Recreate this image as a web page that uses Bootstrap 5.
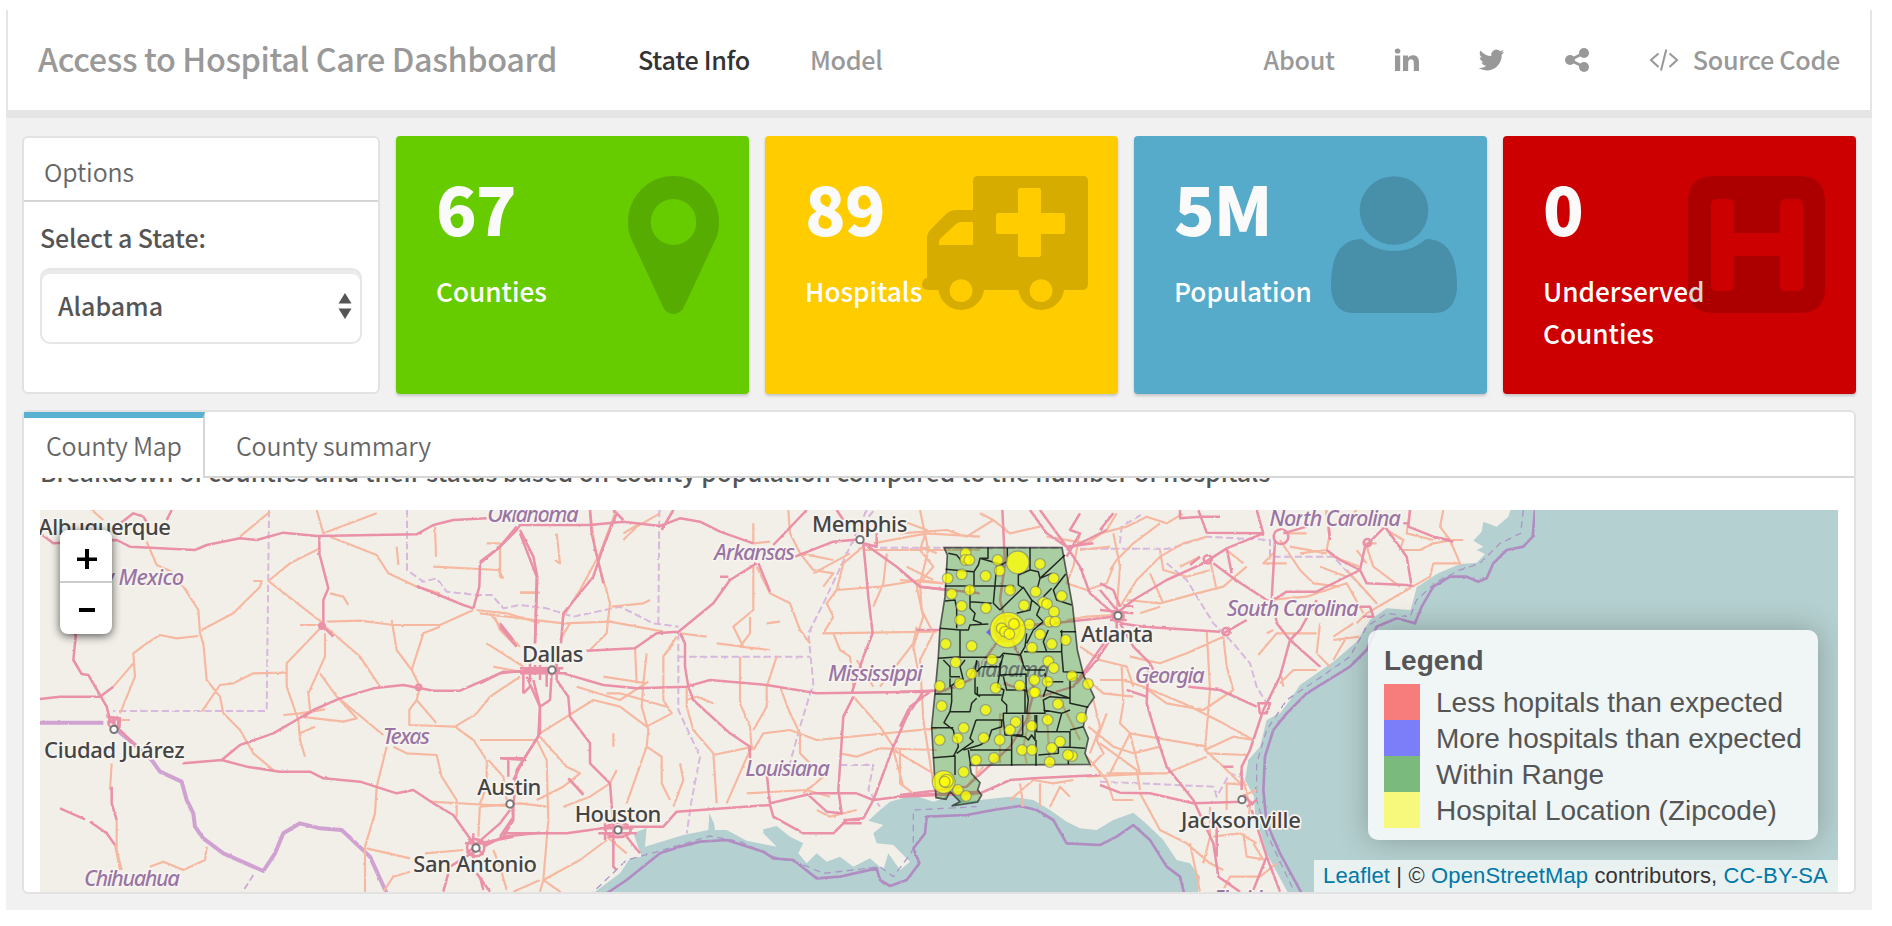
<!DOCTYPE html>
<html lang="en">
<head>
<meta charset="utf-8">
<meta name="viewport" content="width=device-width, initial-scale=1">
<title>Access to Hospital Care Dashboard</title>
<link href="https://cdn.jsdelivr.net/npm/bootstrap@5.3.0/dist/css/bootstrap.min.css" rel="stylesheet">
<style>
body{font-family:"Noto Sans CJK SC","Noto Sans",sans-serif;color:#555;background:#fff;overflow:hidden;height:926px}
.frame{margin:10px 20px 0 6px;height:900px;background:#f1f1f1}
.topbar{height:108px;background:#fff;border:solid #e5e5e5;border-width:0 2px 8px;padding:0 30px 0 30px;flex-wrap:nowrap}
.topbar .navbar-brand{font-size:32.4px;line-height:40px;color:#999;margin:-4px 0 0;width:600px;padding:0;font-weight:500;letter-spacing:-.38px}
.topbar .nav-link{font-size:25.2px;line-height:40px;margin-top:-2px;color:#999;padding:0;white-space:nowrap;font-weight:500;letter-spacing:-.3px}
.topbar .nav-link.active{color:#333}
.topbar svg{display:block;fill:#999}
.dash{padding:18px 16px 0;gap:16px}
.panel{border:2px solid #e2e2e2;border-radius:6px;background:#fff}
.options{width:358px}
.options .panel-title{height:64px;border-bottom:2px solid #d6d6d6;font-size:24.9px;line-height:40px;padding:13px 0 0 20px;font-weight:350;color:#666;letter-spacing:-.1px}
.options label{font-size:25px;line-height:40px;margin:15px 0 11px 16px;display:block;font-weight:500;letter-spacing:-.15px}
.picker{margin:0 16px;height:76px;border:2px solid #e6e6e6;border-radius:10px;box-shadow:inset 0 4px 0 #ebebeb;font-size:25px;font-weight:500;padding:0 8px 0 16px}
.valuebox{flex:1 1 0;height:258px;border-radius:4px;box-shadow:0 2px 3px rgba(0,0,0,.18);color:#fafafa;padding:0 40px;position:relative}
.valuebox .figure-no{font-size:67px;font-weight:900;letter-spacing:-1px;line-height:80px;padding-top:31px}
.valuebox .caption-txt{font-size:26.200px;font-weight:500;line-height:42px;margin-top:23px;color:#fff;width:170px}
.valuebox svg{position:absolute;right:30px;top:40px;fill:#000;fill-opacity:.155}
.tabs-row{height:66px;border-bottom:2px solid #d6d6d6;font-size:25px;font-weight:350;color:#666;line-height:40px;letter-spacing:-.25px}
.tab-on{width:181px;height:66px;border-top:6px solid #59b0d0;border-right:2px solid #d6d6d6;padding:7px 0 0 22px;background:#fff;white-space:nowrap}
.tab-off{padding:13px 0 0 31px}
.scroll-part{height:414px;overflow:hidden;position:relative}
.intro{font-size:24.6px;line-height:40px;margin:-27px 0 19px 16px;white-space:nowrap;font-weight:500}
.map{position:relative;width:1798px;height:382px;margin-left:16px;overflow:hidden}
.map>svg{display:block}
.zoomer{position:absolute;left:20px;top:20px;width:52px;border-radius:8px;background:#fff;box-shadow:0 2px 10px rgba(0,0,0,.65)}
.zoomer div{height:51px;padding-top:2px}
.zoomer div:first-child{height:53px;border-bottom:2px solid #ccc;padding-top:6px}
.zoomer svg{margin-left:2px}
.legend-box{position:absolute;left:1328px;top:120px;width:450px;height:210px;border-radius:10px;background:rgba(255,255,255,.8);box-shadow:0 0 30px rgba(0,0,0,.25);padding:15px 0 0 16px;font:28px/36px "Liberation Sans",Arial,sans-serif;color:#555;white-space:nowrap}
.legend-box h4{font:bold 28px/32px "Liberation Sans",Arial,sans-serif;margin:0;padding:0 0 7px 0}
.legend-box i{width:36px;height:36px;opacity:.75;margin-right:16px}
.legend-box span{position:relative;top:1px}
.credit{position:absolute;right:0;bottom:0;height:32px;width:524px;background:rgba(255,255,255,.7);font:22px/32px "Liberation Sans",Arial,sans-serif;letter-spacing:.14px;color:#333;padding-left:9px;white-space:nowrap}
.credit a{color:#0078a8;text-decoration:none}
.city{font:500 66px "Noto Sans",sans-serif;fill:#444;stroke:#f7f4ef;stroke-width:10px;paint-order:stroke;stroke-linejoin:round}
.region{font:italic 500 66px "Noto Sans",sans-serif;fill:#9a74a3;stroke:#f7f4ef;stroke-width:10px;paint-order:stroke;stroke-linejoin:round}
</style>
<script src="https://cdn.jsdelivr.net/npm/bootstrap@5.3.0/dist/js/bootstrap.bundle.min.js"></script>
</head>
<body>
<div class="frame">
<nav class="navbar topbar d-flex align-items-center">
  <a class="navbar-brand" href="#">Access to Hospital Care Dashboard</a>
  <a class="nav-link active" href="#">State Info</a>
  <a class="nav-link" style="margin-left:60px" href="#">Model</a>
  <div class="d-flex align-items-center ms-auto">
    <a class="nav-link" href="#">About</a>
    <svg style="margin-left:59px" width="26" height="26" viewBox="0 0 26 26"><path d="M1 8.500h5.200V24H1zM3.600 1.400a2.700 2.500 0 1 1 0 5.200a2.700 2.500 0 1 1 0-5.200M9 8.500h5.100v2.200c1-1.500 2.400-2.500 4.800-2.500 3.800 0 6.100 2.500 6.100 7V24h-5.200v-8.200c0-2.200-.8-3.600-2.700-3.600-2 0-2.900 1.500-2.900 3.600V24H9z"/></svg>
    <svg style="margin-left:59px" width="26" height="26" viewBox="64 256 1600 1280"><path d="M1620 408q-67 98-162 167 1 14 1 42 0 130-38 259.500t-115.500 248.500-184.500 210.500-258 146-323 54.500q-271 0-496-145 35 4 78 4 225 0 401-138-105-2-188-64.500t-114-159.500q33 5 61 5 43 0 85-11-112-23-185.500-111.500t-73.500-205.500v-4q68 38 146 41-66-44-105-115t-39-154q0-88 44-163 121 149 294.500 238.500t371.500 99.500q-8-38-8-74 0-134 94.500-228.500t228.500-94.500q140 0 236 102 109-21 205-78-37 115-142 178 93-10 186-50z"/></svg>
    <svg style="margin-left:59px" width="26" height="26" viewBox="0 0 26 26"><path d="M6 13L20 6M6 13L20 20" stroke="#999" stroke-width="3"/><circle cx="6" cy="13" r="5"/><circle cx="20" cy="6" r="5"/><circle cx="20" cy="20" r="5"/></svg>
    <svg style="margin-left:59px" width="30" height="26" viewBox="0 0 30 26"><path d="M9.500 6.500L2 13l7.500 7M20.500 6.500L28 13l-7.500 7M17.300 2.500L12 23.500" fill="none" stroke="#999" stroke-width="2.100"/></svg>
    <a class="nav-link" style="margin-left:14px" href="#">Source Code</a>
  </div>
</nav>
<div class="dash d-flex flex-column">
  <div class="d-flex" style="gap:16px">
    <section class="panel options">
      <div class="panel-title">Options</div>
      <label>Select a State:</label>
      <div class="picker d-flex align-items-center justify-content-between"><span>Alabama</span>
        <svg width="14" height="26" viewBox="0 0 14 26"><path d="M7 0l6.500 10.500H.5zM7 26l6.500-10.500H.5z" fill="#555"/></svg></div>
    </section>
    <section class="valuebox" style="background:#6c0"><div class="figure-no">67</div><div class="caption-txt">Counties</div>
      <svg width="91" height="138" viewBox="384 128 1024 1536" preserveAspectRatio="none"><path d="M1152 640q0-106-75-181t-181-75-181 75-75 181 75 181 181 75 181-75 75-181zm256 0q0 109-33 179l-364 774q-16 33-47.500 52t-67.500 19-67.500-19-46.500-52l-365-774q-33-70-33-179 0-212 150-362t362-150 362 150 150 362z"/></svg></section>
    <section class="valuebox" style="background:#fc0"><div class="figure-no">89</div><div class="caption-txt">Hospitals</div>
      <svg width="166" height="138" viewBox="0 0 166 138"><path fill-rule="evenodd" d="M51 5q0-5 5-5h105q5 0 5 5v103q0 6-6 6h-18a23 23 0 0 1-45.600 0H62a23 23 0 0 1-45.600 0H8q-8 0-8-5 0-6 5-7V62q0-5 4-9l15-15q4-4 10-4h17zM51 46H39q-3 0-5 2L19 62q-2 2-2 4v3h34zM96 14q0-2 2-2h19q2 0 2 2v23h22q2 0 2 2v17q0 2-2 2h-22v21q0 2-2 2H98q-2 0-2-2V58H76q-2 0-2-2V39q0-2 2-2h20zM39 103.300a11.400 11.400 0 1 0 .1 0zM119 103.300a11.400 11.400 0 1 0 .1 0z"/></svg></section>
    <section class="valuebox" style="background:#56aaca"><div class="figure-no">5M</div><div class="caption-txt">Population</div>
      <svg width="126" height="138" viewBox="0 0 126 138"><circle cx="63" cy="34.500" r="34.300"/><path d="M126 110c0 16-8 27-22 27H22C8 137 0 126 0 110c0-28 8-47 31-47 9 8 19 12 32 12s23-4 32-12c23 0 31 19 31 47z"/></svg></section>
    <section class="valuebox" style="background:#c00"><div class="figure-no">0</div><div class="caption-txt">Underserved Counties</div>
      <svg width="138" height="138" viewBox="0 0 138 138"><path fill-rule="evenodd" d="M26 0h86q25 0 25 26v86q0 25-25 25H26q-26 0-26-25V26Q0 0 26 0zM29 23q-6 0-6 6v80q0 6 6 6h11q6 0 6-6V80h46v29q0 6 6 6h11q6 0 6-6V29q0-6-6-6H98q-6 0-6 6v28H46V29q0-6-6-6z"/></svg></section>
  </div>
  <section class="panel">
    <div class="tabs-row d-flex"><div class="tab-on">County Map</div><div class="tab-off">County summary</div></div>
    <div class="scroll-part">
      <p class="intro">Breakdown of counties and their status based on county population compared to the number of hospitals</p>
      <div class="map">
<svg width="1798" height="382" viewBox="120 1530 5394 1146">
<defs><filter id="wob" x="0" y="0" width="1" height="1" filterUnits="objectBoundingBox"><feTurbulence type="fractalNoise" baseFrequency=".07" numOctaves="2" seed="4"/><feDisplacementMap in="SourceGraphic" scale="6" xChannelSelector="R" yChannelSelector="G"/></filter></defs>
<rect x="120" y="1530" width="5394" height="1146" fill="#f2efe9"/>
<g fill="#b5d0d0">
<path d="M1765 2690L1860 2620 1890 2575 1925 2570 1900 2500 1940 2484 1935 2540 2050 2505 2125 2490 2128 2440 2142 2470 2145 2490 2180 2490 2240 2522 2330 2540 2290 2500 2290 2488 2330 2478 2370 2510 2410 2530 2395 2560 2420 2590 2450 2560 2480 2585 2520 2570 2560 2600 2610 2575 2650 2610 2665 2560 2700 2610 2730 2585 2680 2535 2630 2530 2620 2500 2650 2475 2605 2462 2640 2430 2670 2405 2740 2385 2800 2405 2830 2395 2850 2372 2885 2372 2895 2405 2940 2400 3030 2390 3100 2400 3150 2430 3200 2465 3240 2485 3290 2490 3340 2460 3400 2438 3440 2472 3490 2520 3530 2580 3570 2590 3600 2630 3592 2690z"/>
<path d="M4535 1520L4525 1550 4490 1580 4450 1565 4445 1595 4420 1622 4450 1640 4430 1650 4455 1662 4430 1688 4380 1692 4310 1722 4250 1762 4232 1830 4160 1825 4110 1860 4070 1925 4000 1985 3900 2055 3870 2100 3840 2140 3800 2160 3780 2240 3745 2280 3735 2340 3762 2390 3765 2440 3800 2560 3870 2690H5520V1520z"/>
</g>
<g filter="url(#wob)" fill="none" stroke-linejoin="round">
<!-- state and sea borders -->
<g stroke="#d8b8dc" stroke-width="6" stroke-dasharray="22 10">
<path d="M807 1530L800 2133H340M1221 1530V1710L1270 1745 1310 1735 1340 1775 1430 1785 1475 1785 1510 1825 1560 1815 1640 1825 1720 1850 1860 1820 1960 1870 2035 1880M1978 1530L1975 1870M2035 1900V2130L2100 2270 2075 2400 2060 2500M2035 1970H2430M2600 1530L2550 1640 2480 1790 2425 1900 2440 2050 2400 2180 2370 2290M2520 2295H2620L2605 2370 2640 2420M2640 1643H3180M3240 1646L3420 1646M3300 1646H3510L3620 1610 3810 1620 3810 1670H4000L4140 1820M3360 1630L3365 1580 3430 1540M3500 1690L3560 1740 3640 1870 3700 1930 3750 1990 3770 2060 3800 2110M3300 2345L3640 2360 3650 2390 3690 2320 3720 2330M2620 1533L2590 1570"/></g>
<path d="M1765 2690L1880 2580 1990 2550 2130 2508 2220 2525 2320 2570 2400 2590 2470 2620 2560 2610 2640 2600 2680 2630 2740 2550 2740 2430 2930 2420M4570 1530L4562 1600 4500 1630 4440 1690 4380 1710 4310 1745 4250 1800 4230 1850 4160 1840 4100 1880 4050 1970 3950 2040 3860 2100 3800 2190 3770 2290 3770 2400 3800 2500 3890 2690" stroke="#a998c6" stroke-width="4" stroke-dasharray="20 14"/>
<path d="M1820 2680L1880 2640 1980 2560 2040 2540 2100 2525 2180 2520 2290 2555 2320 2575 2380 2580 2450 2635 2520 2630 2630 2605 2640 2640 2670 2658 2720 2640 2758 2590 2740 2545 2775 2500 2780 2450 2900 2445 2980 2430 3060 2418 3110 2430 3160 2460 3200 2530 3300 2535 3350 2510 3400 2475 3450 2520 3500 2600 3540 2630 3555 2690M4605 1530L4598 1610 4570 1640 4520 1650 4480 1690 4460 1735 4435 1745 4400 1730 4350 1730 4300 1760 4265 1820 4245 1870 4190 1855 4130 1880 4100 1950 4050 2000 3920 2080 3860 2140 3820 2190 3795 2270 3790 2370 3800 2470 3840 2560 3905 2680" stroke="#b08cc2" stroke-width="8"/>
<path d="M120 2168H310M350 2190L400 2230 455 2280 480 2315 545 2345 560 2400 580 2440 585 2480 610 2515 670 2560 790 2613 825 2560 850 2500 900 2470 960 2485 1025 2490 1110 2570 1160 2680" stroke="#cfa2d2" stroke-width="12"/>
<path d="M760 2625L725 2680" stroke="#cfa2d2" stroke-width="5" stroke-dasharray="20 10"/>
<!-- secondary roads -->
<g stroke="#f6b8a0" stroke-width="6.500">
<g transform="translate(120 1500)"><path d="M155 30L190 60M320 125L350 195 395 215 430 260 475 330 480 400 490 430 500 540 540 590 550 640 600 690 640 760 700 810M485 390L580 340 660 260 665 243H640M685 243L750 190 840 145M830 30L850 100 1010 40M600 110L690 35M870 110L1010 165 1045 220 1130 260 1200 280M685 243L850 370M850 375L740 490V560L775 660 780 720 795 770M855 400V470L805 580 810 630M840 520L890 590 1030 705M850 375L960 470 1020 560M780 375H840M860 365L960 362 1060 375 1200 375 1300 330M1055 360L1070 450 1115 510 1150 400 1200 380M1115 510L1140 560 1130 600 1190 670M1130 600L1108 630V675L1245 680 1300 720 1340 780M1245 680L1310 640 1350 590 1440 530M1070 140L1075 195M1185 80L1188 170M1180 200L1375 210 1390 235M1340 130H1380V230M1440 278H1500M475 408L410 415 360 405 320 430 280 460 285 530 240 640M280 490L220 560M740 518L640 520 580 550 540 555 485 635M730 645L780 640 855 628M780 650L910 665 950 655 900 600M780 700L825 680M215 790L210 870M230 960V1050L245 1110M225 1035L240 1110M330 1100L370 1085 430 1110 495 1080 500 1040M1040 740L1010 860 1005 940 975 1040V1175M980 1045L1110 1075M1155 1060L1270 1050M1060 740L1100 760 1190 765 1205 830 1250 900 1250 950M1170 905L1400 918M1340 780L1340 860 1320 910 1315 1010M1345 780L1390 830 1400 900M1030 1175L1060 1130 1110 1115M1360 1050L1380 1100 1400 1170M1340 430L1450 500M1360 500L1440 515M1350 340L1390 390 1440 440M1310 330L1400 340 1500 370M870 280L910 290 925 315M245 660H270"/></g>
<g transform="translate(1440 1500)"><path d="M330 30L345 150 390 310 380 400 330 450M405 40L360 160 300 270 250 350M395 320L490 310 510 300M0 340L250 370 390 365 550 395M480 70L430 100M540 40L470 80 430 120M230 100L240 190 225 180M60 130V230L70 235M120 278H170M270 370L240 420M40 340L60 390 110 440M590 410L550 470V600L575 640 500 680 420 620 340 600 180 700M290 560L420 600 505 545M500 460L490 550 485 620 505 690 500 740 440 910M500 740L545 770V850L570 900M600 790L610 840 580 920M0 720L170 720 200 780 205 960 190 1140 180 1175M180 710L260 800 300 820 250 860 170 900M265 835L310 880M400 700V740M410 810L390 850 330 890 250 920M440 1060L380 1010M190 1140L300 1080 380 1020M190 1140L240 1175M0 920L120 910 200 920M100 1175L180 1140M380 580L420 580 560 620M465 440L470 550M370 530L500 550M580 430L550 470M620 560V620L640 690 700 760 710 910M700 765L820 740M740 910L810 750M820 750L850 700 930 690 1010 720 1370 685M780 470V610L810 680 815 750M890 470L860 560 860 620 820 690M900 560L930 640 960 700 960 760 1030 830 970 880M800 880L980 870 1050 890M1080 760L1130 770 1200 745 1370 750M1240 750L1270 860M1240 750L1360 820M1120 590L1200 680 1240 740M820 70V130L870 125M820 200V330L760 380 790 440 710 430M810 350V400L780 440 870 450M830 200L870 280 930 310 960 390 990 430M600 400L680 410M860 370L900 365M925 30L930 100 960 160 1000 210 1060 220 1030 260M960 160L1060 180M1150 140L1090 190 1070 270 1200 260 1320 240 1390 250M1070 270L1040 310 1060 350 1030 400 1370 395M1060 400L1080 450 1110 470 1120 560M1180 560L1130 480M1200 560L1300 430 1310 380M1220 160L1210 250 1180 320M1320 30L1345 150 1320 250 1325 330 1360 400 1320 480 1330 660 1360 850M1150 150H1500M1180 130L1340 100 1500 110M1010 930L1050 950 1130 930M1260 750V850L1300 880M620 600L650 590 700 610M1110 160L1000 220"/></g>
<g transform="translate(2700 1500)"><path d="M0 60L80 90 60 150 100 200 50 260 70 350 40 440 60 540M0 100L140 90 200 110 280 60 330 100 420 80M60 140L110 160M20 200L100 240M0 240L130 250M540 150L630 140M540 100L520 200 500 250 560 270 620 250 640 200M640 100L660 200 650 330M500 360L560 350 640 345M540 440L600 480 680 500 700 560M550 530L610 580 700 590M580 600L600 680 570 760M565 680L640 740 700 760 780 740M620 640L590 720 610 760 570 800M330 900L400 840 460 850 520 840M360 850L370 920M420 850V920M450 920L480 860 510 890M390 640L370 740 380 790M440 640L450 800M300 640V790M230 840V793M250 800L200 860M480 600L540 720M440 110L560 130 620 90 650 40M240 40L280 60M560 770L620 840 640 900 700 900M560 830L760 820"/></g>
<g transform="translate(3300 1470)"><path d="M0 130L80 110 140 80 200 100 250 70M30 240L50 210 100 160 180 100M60 350L110 270 180 200 250 160 320 140M80 330L180 340 290 310 370 290 440 230M150 250L190 340M180 180L190 240 260 260 330 240M330 210L350 300M380 180L430 220M240 230L300 200M120 370L180 350M90 500L180 520 260 490 370 440M65 530L70 640 60 700 90 730 30 850M0 570L70 570 130 590 200 640 310 660 400 600M130 590L250 640 370 700 460 750M320 420L330 600 315 780 370 830 420 880M370 440L380 530 400 600M315 780L400 740 460 750M320 790L440 795M90 730L320 770M90 730L120 850 200 850 320 800M0 760L110 840 120 900M20 850H120M475 495L530 430 650 430M660 400L650 490 690 530M500 330L620 320 680 300 740 280 790 370M740 440L700 510M700 450L780 440M540 580L580 540 650 540M550 590L545 560M520 420L500 430M520 190L490 220 560 220M540 150L600 240 640 280 720 290M560 130L620 130M570 170L680 190M600 190L680 180M680 60L690 130 680 180 700 200 780 230M730 100L770 60M800 170L820 230 900 290M770 180L800 220M830 160L790 160M860 120L910 150 900 180 960 180 1000 160 1060 150M930 60L920 130 1000 150M1000 220L1080 220 1050 150 1020 110 1030 60M1000 220L990 260 920 300 800 370 770 400M1060 150H1090M740 240L830 340M660 230L740 260M700 440L760 400M120 910L180 1020 260 1060 330 1120 370 1140M270 1060L300 1205M330 950V1040L310 1120M340 1040L420 1030 470 1060M430 1030L440 1100 500 1110M430 870L450 950 440 1020M380 960V880L440 885M370 1200L390 1160 480 1160 530 1120M460 1060L490 1110M470 900L420 920"/></g>
</g>
<!-- motorways -->
<g stroke="#ea90a7" stroke-width="7.500">
<g transform="translate(120 1500)"><path d="M0 100L40 130 230 120 270 140 465 150 500 135 600 115 650 120 730 98 830 108 1130 103 1180 75 1240 60 1340 55M235 75L280 40 310 50M325 75L310 50M380 60L395 30M838 110V160L865 265 850 300V375M1430 80L1380 140 1320 190 1318 260 1300 325M1130 258L1270 315 1300 325M1440 100L1490 230 1485 430M108 400L100 480 125 522 145 525 200 620 210 660 290 740M0 597L60 590 180 590 220 560M430 790L545 780 600 735 700 700 820 630 900 595 1000 565 1090 555 1180 572 1260 572 1380 520 1450 512M545 780L620 800 720 815 810 815 850 835 960 845 1070 880 1120 870 1180 910 1240 945 1300 1030M1300 1040L1380 970 1410 930M1390 1010L1420 960 1415 900M1330 1040L1390 1010 1500 998M1310 1050L1230 1100 1210 1175M1310 1120L1350 1175M215 860L215 910 230 960M60 925L135 958M150 965L200 1000 225 1035M1480 540L1500 620V700L1450 780 1420 840M1385 775L1460 780M1405 780V830M1450 520V580M1300 1000V1080M1275 1030H1340M1280 1060L1330 1020M1285 1015L1330 1065M850 380L880 410M200 650L240 655 238 685M205 670L235 650M225 650L222 680M830 625L790 650M1380 370L1420 420"/><circle cx="1136" cy="562" r="8"/><circle cx="846" cy="378" r="8" fill="#ea90a7"/><circle cx="1307" cy="1043" r="26"/><circle cx="220" cy="668" r="15"/></g>
<g transform="translate(1440 1500)"><path d="M0 185L60 140 110 90 120 75 330 75 430 65 540 78 600 55 660 65 720 95 820 130M120 90L160 170 172 230 165 430M400 30L430 60M410 40L370 140 340 230 250 340 243 430M330 30L335 100 370 250M580 30L545 90M320 452L465 445 530 400 590 395M590 400L700 310 750 240 830 190M880 135L980 30M835 190L870 275M945 170L1060 125 1140 118M600 400L615 430V500L625 560M250 520L370 555 470 565 620 560 690 540 860 555 1010 580 1330 575 1380 570M625 560L640 600 750 700 810 740V780M1120 590L1090 650 1075 870 1085 940 1040 935 980 880M870 910L1000 880 1130 880 1180 900 1300 885 1500 875M1180 900L1240 740 1280 650 1330 575M1115 580L1150 470 1178 400 1165 290 1150 130M1145 125L1250 200 1320 260 1500 280M1190 100V140L1150 130M0 550L70 515 130 515M140 530L180 620 175 710 110 810 100 920M215 520L210 600 180 620M230 540L265 590 270 650 330 730V790L390 850 400 980M70 1000L260 1000 400 980 550 980 590 935 870 915 880 950 970 1000 1060 1000 1100 960 1150 955 1180 900M0 1030L100 1010M60 1010L100 950V910M400 990V1100L410 1110M440 1010L480 1060M860 820L870 910M10 1170L0 1130M360 985H460M355 1000H470M375 970V1020M385 1010L430 1010M120 505H250M120 520H260M130 512H240M150 490V560L130 580M165 495V525M180 495V540M200 500V560M230 490V540M60 380L110 440M60 775H140M265 835L310 885M720 230H745M1090 960H1140M1085 970H1145M1310 390H1380M1070 30L1090 60"/><ellipse cx="414" cy="990" rx="38" ry="22"/></g>
<g transform="translate(2700 1500)"><path d="M307 30L315 190 300 300 320 380 350 450 400 560 420 590 520 560 640 390M0 210L60 260 140 270M0 575L100 572M310 550L400 580M390 30L440 100 500 140 540 200 570 280 640 340M540 40L510 90 540 100 500 170M620 90L500 150M530 550L590 480 650 390M400 580L380 660 330 740 200 860 0 885M320 380L460 370 640 350M0 680L30 620 90 575M0 890L240 880 330 840 400 835 600 825M680 570L740 590M310 400L210 540 110 580M420 30L500 140 580 130"/><circle cx="322" cy="385" r="38"/></g>
<g transform="translate(3300 1470)"><path d="M0 120L40 70M0 300L50 360M50 370L100 330 200 270 310 220 380 175 490 130 320 128 295 60M240 60V85L300 80 360 80M380 175L395 250M340 220L400 265 500 330M490 130L470 60M525 150L515 330M550 130L620 110M520 330L560 305 650 305 720 270 780 240 795 170 855 110 920 200 935 290M520 330L530 400 570 450 660 530M780 240L800 280 920 285 940 290M690 150L685 110M680 180L720 210 780 240M650 330L600 420 570 450 540 560 490 660 460 750 450 780 425 830 425 900M930 60L925 110 1000 140 1060 155M1000 140L1050 150M925 100H910M60 400L130 410 360 425M370 430L440 390M60 400L100 470 150 520 160 540M265 590L360 600 470 650M145 530L140 640 170 740 200 830 280 930 340 1060 355 1160 420 1205M0 885L60 908 150 910 280 940 430 935M455 960L500 1100 540 1205M500 1100L460 1200M370 830H400M350 1000L350 1100M770 350H810L820 380H790M0 360L100 370M60 350L40 300 0 280M50 430V380M30 390H80M70 345L100 350M430 915L460 945M440 950L470 930M270 225L300 200M475 640L510 640 500 670H480Z"/><circle cx="543" cy="140" r="22"/><circle cx="378" cy="425" r="11"/><circle cx="323" cy="208" r="12"/><circle cx="802" cy="158" r="11"/><circle cx="54" cy="378" r="17"/></g>
</g>
</g>
<!-- place labels -->
<g transform="translate(120 1500)">
<text class="city" x="-5" y="105" textLength="398">Albuquerque</text>
<text class="region" x="98" y="255" textLength="335">New Mexico</text>
<text class="city" x="12" y="773" textLength="422">Ciudad Juárez</text>
<text class="region" x="132" y="1157" textLength="288">Chihuahua</text>
<text class="region" x="1028" y="731" textLength="142">Texas</text>
<text class="city" x="1312" y="885" textLength="192">Austin</text>
<text class="city" x="1120" y="1115" textLength="371">San Antonio</text>
</g>
<g transform="translate(1440 1500)">
<text class="region" x="22" y="65" textLength="274">Oklahoma</text>
<text class="city" x="126" y="485" textLength="184">Dallas</text>
<text class="city" x="284" y="965" textLength="260">Houston</text>
<text class="region" x="703" y="180" textLength="242">Arkansas</text>
<text class="city" x="996" y="95" textLength="286">Memphis</text>
<text class="region" x="1044" y="542" textLength="284">Mississippi</text>
<text class="region" x="796" y="828" textLength="254">Louisiana</text>
</g>
<g transform="translate(3300 1470)">
<text class="city" x="-57" y="455" textLength="217">Atlanta</text>
<text class="region" x="104" y="580" textLength="210">Georgia</text>
<text class="region" x="380" y="377" textLength="396">South Carolina</text>
<text class="region" x="508" y="107" textLength="395">North Carolina</text>
<text class="city" x="243" y="1015" textLength="360">Jacksonville</text>
<text class="region" x="340" y="1249" textLength="180">Florida</text>
</g>
<g fill="#fff" stroke="#777" stroke-width="6"><circle cx="342" cy="2188" r="11"/><circle cx="1530" cy="2412" r="11"/><circle cx="1428" cy="2544" r="11"/><circle cx="1656" cy="2010" r="11"/><circle cx="1854" cy="2490" r="11"/><circle cx="2580" cy="1619" r="11"/><circle cx="3354" cy="1847" r="11"/><circle cx="3726" cy="2399" r="11"/></g>
<!-- Alabama counties and hospitals -->
<g transform="translate(2700 1500)">
<text class="region" x="208" y="530" textLength="240">Alabama</text>
<path d="M132 143H486L518 320 532 450 552 530 568 560 583 592 560 625 550 680 565 715 555 760 570 793 210 796 214 820 240 848 233 870 245 885 233 906 155 918 180 905 150 875 138 898 108 893 100 770 95 680 105 580 115 470 120 385 135 290 142 165z" fill="#008000" fill-opacity=".3" stroke="#222" stroke-opacity=".7" stroke-width="5"/>
<path d="M258 397l14-14v26z" fill="#66f"/>
<g fill="none" stroke="#000" stroke-opacity=".8" stroke-width="4.500" stroke-linejoin="round"><path d="M145 160L170 165 190 190M264 143V175H240L235 195 222 215V255M240 175L310 195M322 143V185L290 200 285 255 280 310 300 330M390 143V210L355 225V255L370 265M137 208L220 215M135 258H340V275M392 210L415 215 420 235 412 265M420 235L495 165M420 235L455 220M497 222L460 270 470 300 515 315M135 303L165 300 170 325V385M210 255V325L225 340 220 360 245 370M210 305L275 310M300 330L370 262 395 300 390 330 350 340M395 300L420 320 410 345 430 365M455 265L430 290M120 385L180 390V470M180 390H205L210 375 265 372M180 470L115 475M180 472H300L310 460 360 465 375 440 380 400M362 465L370 495 378 510H435M372 455H485V390M480 395H528M430 365L400 390 380 430M445 390L430 425 440 455M485 455L490 515 550 518M130 480L150 500V530H180M195 480L180 500 190 540M150 535V560L185 535M230 480L225 520 245 500H300L310 465M300 490V525L378 522V560M225 520V580L240 590M298 525L292 560 312 570 305 600 320 615V640M105 582H155V605L150 635H210L215 610 230 595M232 560V585H305M155 560V580M150 635L132 668 160 690 165 715M310 530L320 570H375V640M378 560L385 600 380 640M375 640H435L430 600 450 590 510 595M435 520L440 560 430 590M435 545H490M438 570L510 595V540L530 530M510 555V610L565 622M430 630L485 640 510 630M485 640L470 695H415M95 683H160M228 660H310V640H375M228 660L210 715 220 725 170 760M305 660V680L275 690 265 720 240 735 190 750M170 710L175 740 160 770M310 660L315 705H368V645M335 705V797M315 705L375 710 385 720 395 705 405 720V645M408 720V797M410 645V695L470 695 510 695V742L555 745M510 742H475V760L415 765M505 765V793M510 690L550 680M100 773L165 768V825M210 750H335M205 750L212 796"/></g>
<g id="hosp" fill="#ff0" fill-opacity=".78" stroke="#777" stroke-opacity=".55" stroke-width="4"></g>
</g>
</svg>
        <div class="zoomer"><div class="d-flex align-items-center justify-content-center"><svg width="20" height="20" viewBox="0 0 20 20"><path d="M8 0h4v8.500h8v3.500h-8v8H8v-8H0V8.500h8z"/></svg></div><div class="d-flex align-items-center justify-content-center"><svg width="16" height="4"><path d="M0 0h16v4H0z"/></svg></div></div>
        <div class="legend-box"><h4>Legend</h4>
          <div class="d-flex"><i style="background:#fa5454"></i><span>Less hopitals than expected</span></div>
          <div class="d-flex"><i style="background:#5454fa"></i><span>More hospitals than expected</span></div>
          <div class="d-flex"><i style="background:#54a654"></i><span>Within Range</span></div>
          <div class="d-flex"><i style="background:#fafa54"></i><span>Hospital Location (Zipcode)</span></div></div>
        <div class="credit"><a href="#">Leaflet</a> | © <a href="#">OpenStreetMap</a> contributors, <a href="#">CC-BY-SA</a></div>
      </div>
    </div>
  </section>
</div>
</div>
<script>
// hospital markers: x, y and optional radius
const sites="197,160 196,180 208,180 293,180 299,212 353,187,34 420,192 185,223 143,235 257,228 461,235 155,282 209,270 330,270 407,275 485,288 185,318 258,324 372,316 430,307 441,312 462,335 180,360 448,365 466,365 388,373 323,390,53 305,385 315,395 342,372 328,402 420,403 497,420 455,432 396,443 137,432 215,438 167,487 276,479 445,484 461,504 215,521 516,528 403,540 443,545 564,552 119,558 179,551 287,564 359,557 400,578 405,577 125,618 257,630 474,612 545,653 347,666 443,660 330,690 395,678 191,684 119,720 173,715 251,714 299,720 480,725 455,744 366,750 396,750 516,768 504,765 449,786 282,774 228,780 191,816 131,846,34 140,843,20 134,845 174,870 198,888";
document.getElementById("hosp").innerHTML=sites.split(" ").map(s=>{const[x,y,r]=s.split(",");return `<circle cx="${x}" cy="${y}" r="${r||16}"/>`}).join("");
</script>
</body>
</html>
